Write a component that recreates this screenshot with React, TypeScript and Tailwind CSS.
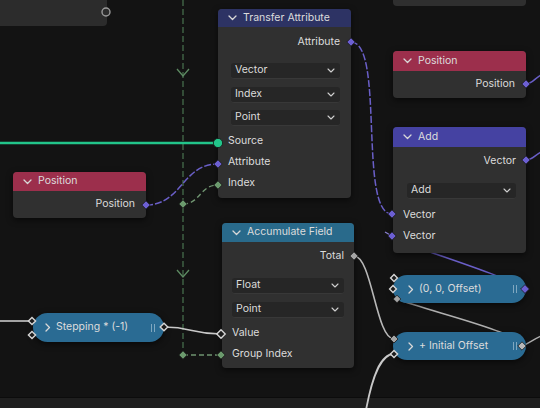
import React from "react";

function ChevDown() {
  return (
    <svg width="9" height="6" viewBox="0 0 9 6" className="shrink-0">
      <path d="M1 1 L4.5 4.5 L8 1" fill="none" stroke="#d8d8d8" strokeWidth="1.3" strokeLinecap="round" strokeLinejoin="round" />
    </svg>
  );
}

function ChevRight() {
  return (
    <svg width="6" height="9" viewBox="0 0 6 9" className="shrink-0">
      <path d="M1 1 L4.5 4.5 L1 8" fill="none" stroke="#d8d8d8" strokeWidth="1.3" strokeLinecap="round" strokeLinejoin="round" />
    </svg>
  );
}

function SmallChev() {
  return (
    <svg width="8" height="5" viewBox="0 0 8 5" className="shrink-0">
      <path d="M1 1 L4 4 L7 1" fill="none" stroke="#cfcfcf" strokeWidth="1.1" strokeLinecap="round" strokeLinejoin="round" />
    </svg>
  );
}

function Dropdown({ label, cls }: { label: string; cls: string }) {
  return (
    <div className={"h-[16px] rounded-[3px] bg-[#262626] border-b border-[#383838] flex items-center justify-between pl-[4px] pr-[5px] " + cls}>
      <span>{label}</span>
      <SmallChev />
    </div>
  );
}

function Grip() {
  return (
    <div className="flex gap-[2px] mr-[9px]">
      <div className="w-[1px] h-[8px] bg-[#7fa7c0]" />
      <div className="w-[1px] h-[8px] bg-[#7fa7c0]" />
    </div>
  );
}

function Diamond({ x, y, fill, hollow, s = 4.2 }: { x: number; y: number; fill: string; hollow?: boolean; s?: number }) {
  const d = `M ${x} ${y - s} L ${x + s} ${y} L ${x} ${y + s} L ${x - s} ${y} Z`;
  if (hollow) {
    return <path d={d} fill="#1c1c1c" stroke="#d6d6d6" strokeWidth="1.4" />;
  }
  return <path d={d} fill={fill} stroke="#161616" strokeWidth="0.8" />;
}

export default function App() {
  return (
    <div className="relative w-[540px] h-[408px] overflow-hidden bg-[#131313] text-[10.5px] leading-none text-[#dcdcdc] font-['Inter','DejaVu_Sans',sans-serif]">
      {/* bottom strip */}
      <div className="absolute left-0 right-0 bottom-0 h-[11px] bg-[#1f1f1f] border-t border-[#0c0c0c]" />

      {/* links under nodes */}
      <svg className="absolute inset-0" width="540" height="408" viewBox="0 0 540 408">
        {/* frame dashed line */}
        <line x1="183" y1="0" x2="183" y2="355" stroke="#4a7450" strokeWidth="1.2" strokeDasharray="6 3" />
        <path d="M177 69 L183 76 L189 69" fill="none" stroke="#5d8a62" strokeWidth="1.3" />
        <path d="M177 270 L183 277 L189 270" fill="none" stroke="#5d8a62" strokeWidth="1.3" />
        <line x1="183" y1="355" x2="221" y2="355" stroke="#6f9470" strokeWidth="1.4" strokeDasharray="5 3" />
        <path d="M183 204 C 200 204, 200 185, 218 185" fill="none" stroke="#6f9470" strokeWidth="1.4" strokeDasharray="5 3" />

        {/* green geometry link */}
        <line x1="0" y1="143" x2="218" y2="143" stroke="#22c58a" strokeWidth="2.6" />

        {/* purple links */}
        <path d="M146 205 C 182 205, 182 164, 218 164" fill="none" stroke="#6a5fc8" strokeWidth="1.5" strokeDasharray="7 2" />
        <path d="M351 42 C 385 42, 358 214, 392 214" fill="none" stroke="#6a5fc8" strokeWidth="1.5" strokeDasharray="7 2" />
        <path d="M526 84 C 532 84, 535 78, 541 75" fill="none" stroke="#6a5fc8" strokeWidth="1.5" />
        <path d="M526 160 C 532 160, 535 155, 541 152" fill="none" stroke="#6a5fc8" strokeWidth="1.5" />
        <path d="M525 289 C 512 280, 470 266, 430 252 S 400 240, 392 236" fill="none" stroke="#6a5fc8" strokeWidth="1.5" />
        <path d="M385 232 L 392 236" fill="none" stroke="#8d84d6" strokeWidth="1.3" />

        {/* gray links */}
        <line x1="0" y1="321" x2="32" y2="321" stroke="#c9c9c9" strokeWidth="1.6" />
        <path d="M164 327 C 192 327, 192 334, 221 334" fill="none" stroke="#c9c9c9" strokeWidth="1.6" />
        <path d="M354 256 C 372 256, 376 339, 394 339" fill="none" stroke="#b8b8b8" strokeWidth="1.6" />
        <path d="M366 410 C 372 378, 380 354, 394 354" fill="none" stroke="#c9c9c9" strokeWidth="1.8" />
        <path d="M397 299 C 420 308, 470 320, 500 332 S 520 344, 522 346" fill="none" stroke="#b0b0b0" strokeWidth="1.5" />
        <path d="M522 346 C 528 344, 532 340, 541 336" fill="none" stroke="#b0b0b0" strokeWidth="1.3" />
      </svg>

      {/* top-left partial node */}
      <div className="absolute left-0 top-0 w-[107px] h-[26px] bg-[#2c2c2c] rounded-br-[4px]" />

      {/* top-right partial node */}
      <div className="absolute left-[393px] top-0 w-[133px] h-[6px] bg-[#2f2f2f] rounded-b-[4px]" />

      {/* Transfer Attribute */}
      <div className="absolute left-[218px] top-[9px] w-[133px] rounded-[4px] bg-[#303030] overflow-hidden shadow-[0_2px_6px_rgba(0,0,0,0.6)]">
        <div className="h-[18px] bg-[#2d3364] flex items-center pl-[10px] gap-[6px]">
          <ChevDown />
          <span>Transfer Attribute</span>
        </div>
        <div className="flex flex-col pl-[13px] pr-[11px] pb-[4px]">
          <div className="h-[20px] mt-[5px] flex items-center justify-end">Attribute</div>
          <Dropdown label="Vector" cls="mt-[11px]" />
          <Dropdown label="Index" cls="mt-[8px]" />
          <Dropdown label="Point" cls="mt-[7px]" />
          <div className="h-[21px] mt-[5px] -ml-[3px] flex items-center">Source</div>
          <div className="h-[21px] -ml-[3px] flex items-center">Attribute</div>
          <div className="h-[21px] -ml-[3px] flex items-center">Index</div>
        </div>
      </div>

      {/* Position (right) */}
      <div className="absolute left-[393px] top-[51px] w-[133px] rounded-[4px] bg-[#303030] overflow-hidden shadow-[0_2px_6px_rgba(0,0,0,0.6)]">
        <div className="h-[20px] bg-[#9c2f4c] flex items-center pl-[10px] gap-[6px]">
          <ChevDown />
          <span>Position</span>
        </div>
        <div className="h-[27px] flex items-center justify-end pr-[11px] pb-[1px]">Position</div>
      </div>

      {/* Add */}
      <div className="absolute left-[393px] top-[127px] w-[133px] rounded-[4px] bg-[#303030] overflow-hidden shadow-[0_2px_6px_rgba(0,0,0,0.6)]">
        <div className="h-[20px] bg-[#4542a2] flex items-center pl-[10px] gap-[6px]">
          <ChevDown />
          <span>Add</span>
        </div>
        <div className="flex flex-col pl-[14px] pr-[10px] pb-[6px]">
          <div className="h-[20px] mt-[4px] flex items-center justify-end">Vector</div>
          <Dropdown label="Add" cls="mt-[12px]" />
          <div className="h-[21px] mt-[6px] -ml-[4px] flex items-center">Vector</div>
          <div className="h-[21px] -ml-[4px] flex items-center">Vector</div>
        </div>
      </div>

      {/* Position (left) */}
      <div className="absolute left-[13px] top-[172px] w-[133px] rounded-[4px] bg-[#303030] overflow-hidden shadow-[0_2px_6px_rgba(0,0,0,0.6)]">
        <div className="h-[19px] bg-[#9c2f4c] flex items-center pl-[10px] gap-[6px]">
          <ChevDown />
          <span>Position</span>
        </div>
        <div className="h-[27px] flex items-center justify-end pr-[11px]">Position</div>
      </div>

      {/* Accumulate Field */}
      <div className="absolute left-[222px] top-[223px] w-[132px] rounded-[4px] bg-[#303030] overflow-hidden shadow-[0_2px_6px_rgba(0,0,0,0.6)]">
        <div className="h-[19px] bg-[#296a8b] flex items-center pl-[10px] gap-[6px]">
          <ChevDown />
          <span>Accumulate Field</span>
        </div>
        <div className="flex flex-col pl-[10px] pr-[10px] pb-[3px]">
          <div className="h-[20px] mt-[4px] flex items-center justify-end">Total</div>
          <Dropdown label="Float" cls="mt-[12px]" />
          <Dropdown label="Point" cls="mt-[8px]" />
          <div className="h-[21px] mt-[5px] flex items-center">Value</div>
          <div className="h-[21px] flex items-center">Group Index</div>
        </div>
      </div>

      {/* Stepping pill */}
      <div className="absolute left-[33px] top-[313px] w-[131px] h-[29px] rounded-full bg-[#2a6b93] flex items-center pl-[12px] gap-[5px] shadow-[0_2px_6px_rgba(0,0,0,0.6)]">
        <ChevRight />
        <span className="flex-1">Stepping * (-1)</span>
        <Grip />
      </div>

      {/* (0, 0, Offset) pill */}
      <div className="absolute left-[393px] top-[275px] w-[133px] h-[28px] rounded-full bg-[#2a6b93] flex items-center pl-[15px] gap-[5px] shadow-[0_2px_6px_rgba(0,0,0,0.6)]">
        <ChevRight />
        <span className="flex-1">(0, 0, Offset)</span>
        <Grip />
      </div>

      {/* + Initial Offset pill */}
      <div className="absolute left-[393px] top-[332px] w-[133px] h-[28px] rounded-full bg-[#2a6b93] flex items-center pl-[15px] gap-[5px] shadow-[0_2px_6px_rgba(0,0,0,0.6)]">
        <ChevRight />
        <span className="flex-1">+ Initial Offset</span>
        <Grip />
      </div>

      {/* sockets */}
      <svg className="absolute inset-0 pointer-events-none" width="540" height="408" viewBox="0 0 540 408">
        <circle cx="106" cy="12" r="4" fill="#2c2c2c" stroke="#9a9a9a" strokeWidth="1.4" />
        <Diamond x={351} y={42} fill="#6c5fd2" />
        <circle cx="218" cy="143" r="4.6" fill="#22c58a" stroke="#161616" strokeWidth="0.8" />
        <Diamond x={218} y={164} fill="#6c5fd2" />
        <Diamond x={218} y={185} fill="#6b9a6d" />
        <Diamond x={183} y={204} fill="#6b9a6d" />
        <Diamond x={183} y={355} fill="#6b9a6d" />
        <Diamond x={526} y={84} fill="#6c5fd2" />
        <Diamond x={146} y={205} fill="#6c5fd2" />
        <Diamond x={526} y={160} fill="#6c5fd2" />
        <Diamond x={392} y={214} fill="#6c5fd2" />
        <Diamond x={392} y={236} fill="#6c5fd2" />
        <Diamond x={354} y={256} fill="#a4a4a4" />
        <Diamond x={221} y={334} fill="#fff" hollow />
        <Diamond x={221} y={355} fill="#6b9a6d" />
        <Diamond x={32} y={321} fill="#fff" hollow s={3.6} />
        <Diamond x={32} y={335} fill="#fff" hollow s={3.6} />
        <Diamond x={164} y={327} fill="#fff" hollow s={3.8} />
        <Diamond x={394} y={278} fill="#fff" hollow s={3.4} />
        <Diamond x={393} y={289} fill="#fff" hollow s={3.4} />
        <Diamond x={397} y={299} fill="#a4a4a4" s={3.8} />
        <Diamond x={525} y={289} fill="#6c5fd2" s={4.4} />
        <Diamond x={394} y={339} fill="#a4a4a4" s={4} />
        <Diamond x={394} y={354} fill="#fff" hollow s={3.6} />
        <Diamond x={522} y={346} fill="#b8b8b8" s={4.2} />
      </svg>
    </div>
  );
}
